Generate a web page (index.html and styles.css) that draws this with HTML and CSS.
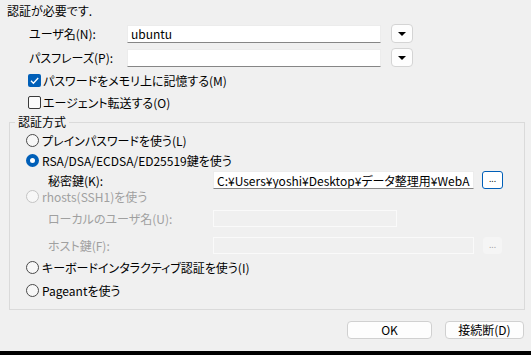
FILE: index.html
```html
<!DOCTYPE html>
<html lang="ja">
<head>
  <meta charset="UTF-8">
  <title>SSH認証</title>
  <link rel="stylesheet" href="styles.css">
</head>
<body>
  <div class="dialog">
    <p class="title">認証が必要です.</p>

    <div class="fields">
      <label class="field-label">ユーザ名(N):</label>
      <input class="text" type="text" value="ubuntu">
      <button class="drop"><span class="tri"></span></button>

      <label class="field-label">パスフレーズ(P):</label>
      <input class="text" type="password">
      <button class="drop"><span class="tri"></span></button>
    </div>

    <div class="check-row">
      <span class="box checked">
        <svg width="13" height="13" viewBox="0 0 13 13"><path d="M3 6.8 L5.4 9.2 L10.2 4" fill="none" stroke="#fff" stroke-width="1.3"/></svg>
      </span>
      パスワードをメモリ上に記憶する(M)
    </div>
    <div class="check-row second">
      <span class="box"></span>
      エージェント転送する(O)
    </div>

    <fieldset class="group">
      <legend>認証方式</legend>
      <div class="group-body">
        <div class="opt">
          <span class="radio"></span>プレインパスワードを使う(L)
        </div>
        <div class="opt">
          <span class="radio on"></span>RSA/DSA/ECDSA/ED25519鍵を使う
        </div>
        <div class="sub">
          <span class="sub-label">秘密鍵(K):</span>
          <input class="text key" type="text" value="C:¥Users¥yoshi¥Desktop¥データ整理用¥WebARENA¥id_rsa">
          <button class="more focus">...</button>
        </div>
        <div class="opt off">
          <span class="radio"></span>rhosts(SSH1)を使う
        </div>
        <div class="sub off">
          <span class="sub-label">ローカルのユーザ名(U):</span>
          <input class="text dis short" type="text" disabled>
        </div>
        <div class="sub off">
          <span class="sub-label">ホスト鍵(F):</span>
          <input class="text dis key" type="text" disabled>
          <button class="more dis-btn" disabled>...</button>
        </div>
        <div class="opt">
          <span class="radio"></span>キーボードインタラクティブ認証を使う(I)
        </div>
        <div class="opt">
          <span class="radio"></span>Pageantを使う
        </div>
      </div>
    </fieldset>

    <div class="footer">
      <button class="btn ok">OK</button>
      <button class="btn cancel">接続断(D)</button>
    </div>
  </div>
  <div class="bottom-bar"></div>
</body>
</html>
```

FILE: styles.css
```css
/* Base */
body {
  margin: 0;
  height: 355px;
  display: flex;
  flex-direction: column;
  background-color: #f0f0f0;
  color: #000;
  font-family: "Noto Sans CJK JP", "Noto Sans", sans-serif;
  font-size: 12px;
  font-feature-settings: "palt";
  overflow: hidden;
}

.dialog {
  flex: 1;
  display: flex;
  flex-direction: column;
}

.title {
  margin: 3px 0 0 7px;
  height: 16px;
  line-height: 16px;
}

/* Top fields */
.fields {
  margin: 5px 0 0 29px;
  display: grid;
  grid-template-columns: 88px 254px 22px;
  grid-template-rows: 19px 19px;
  column-gap: 10px;
  row-gap: 5px;
  align-items: center;
}

.field-label {
  line-height: 16px;
}

.text {
  box-sizing: border-box;
  height: 18px;
  margin: 0;
  padding: 0 3px;
  font: inherit;
  font-feature-settings: "palt";
  color: #000;
  background-color: #fff;
  border: 1px solid #ececec;
  border-bottom-color: #868686;
  outline: none;
}

.drop {
  box-sizing: border-box;
  width: 22px;
  height: 19px;
  padding: 0;
  background-color: #fdfdfd;
  border: 1px solid #d4d4d4;
  border-radius: 4px;
  display: flex;
  align-items: center;
  justify-content: center;
}

.tri {
  width: 0;
  height: 0;
  border-left: 4px solid transparent;
  border-right: 4px solid transparent;
  border-top: 4px solid #000;
  margin-top: 1px;
}

/* Checkboxes */
.check-row {
  margin: 3px 0 0 28px;
  height: 20px;
  display: flex;
  align-items: center;
  gap: 2px;
}

.check-row.second {
  margin-top: 2px;
}

.box {
  box-sizing: border-box;
  width: 13px;
  height: 13px;
  border: 1px solid #3a3a3a;
  border-radius: 2px;
  background-color: #fbfbfb;
  display: flex;
}

.box.checked {
  border: none;
  background-color: #005fb8;
}

/* Group box */
.group {
  margin: 2px 6px 0 9px;
  padding: 0;
  border: 1px solid #dadada;
  min-width: 0;
}

.group legend {
  margin-left: 5px;
  padding: 0 3px;
  line-height: 16px;
}

.group-body {
  padding: 0 0 8px 16px;
  display: grid;
  grid-template-rows: 20px 20px 20px 12px 32px 22px 23px 22px;
}

.opt {
  display: flex;
  align-items: center;
  gap: 3px;
}

.radio {
  box-sizing: border-box;
  width: 13px;
  height: 13px;
  border: 1px solid #4a4a4a;
  border-radius: 50%;
  background-color: #f7f7f7;
}

.radio.on {
  border: 4px solid #005fb8;
  background-color: #fff;
}

.off {
  color: #a0a0a0;
}

.off .radio {
  border-color: #c4c4c4;
}

.sub {
  display: flex;
  align-items: center;
  padding-left: 22px;
}

.sub-label {
  width: 165px;
  flex-shrink: 0;
}

.key {
  width: 261px;
}

.short {
  width: 184px;
}

.dis {
  height: 17px;
  background-color: #f0f0f0;
  border: 1px solid #fafafa;
}

.more {
  box-sizing: border-box;
  width: 21px;
  height: 18px;
  margin-left: 8px;
  padding: 0 0 4px;
  font: 9px "Noto Sans", sans-serif;
  background-color: #fdfdfd;
  border: 1px solid #d4d4d4;
  border-radius: 3px;
}

.more.focus {
  border-color: #005fb8;
  background-color: #fff;
}

.dis-btn {
  width: 19px;
  height: 17px;
  margin-left: 9px;
  color: #a0a0a0;
  background-color: #f5f5f5;
  border-color: #f5f5f5;
}

/* Footer buttons */
.footer {
  margin: 11px 7px 0 0;
  display: flex;
  justify-content: flex-end;
  gap: 13px;
}

.btn {
  box-sizing: border-box;
  height: 18px;
  padding: 0;
  font: inherit;
  font-feature-settings: "palt";
  line-height: 16px;
  background-color: #fdfdfd;
  border: 1px solid #d0d0d0;
  border-radius: 4px;
}

.ok {
  width: 85px;
}

.cancel {
  width: 79px;
}

.bottom-bar {
  height: 4px;
  background-color: #000;
}
```
